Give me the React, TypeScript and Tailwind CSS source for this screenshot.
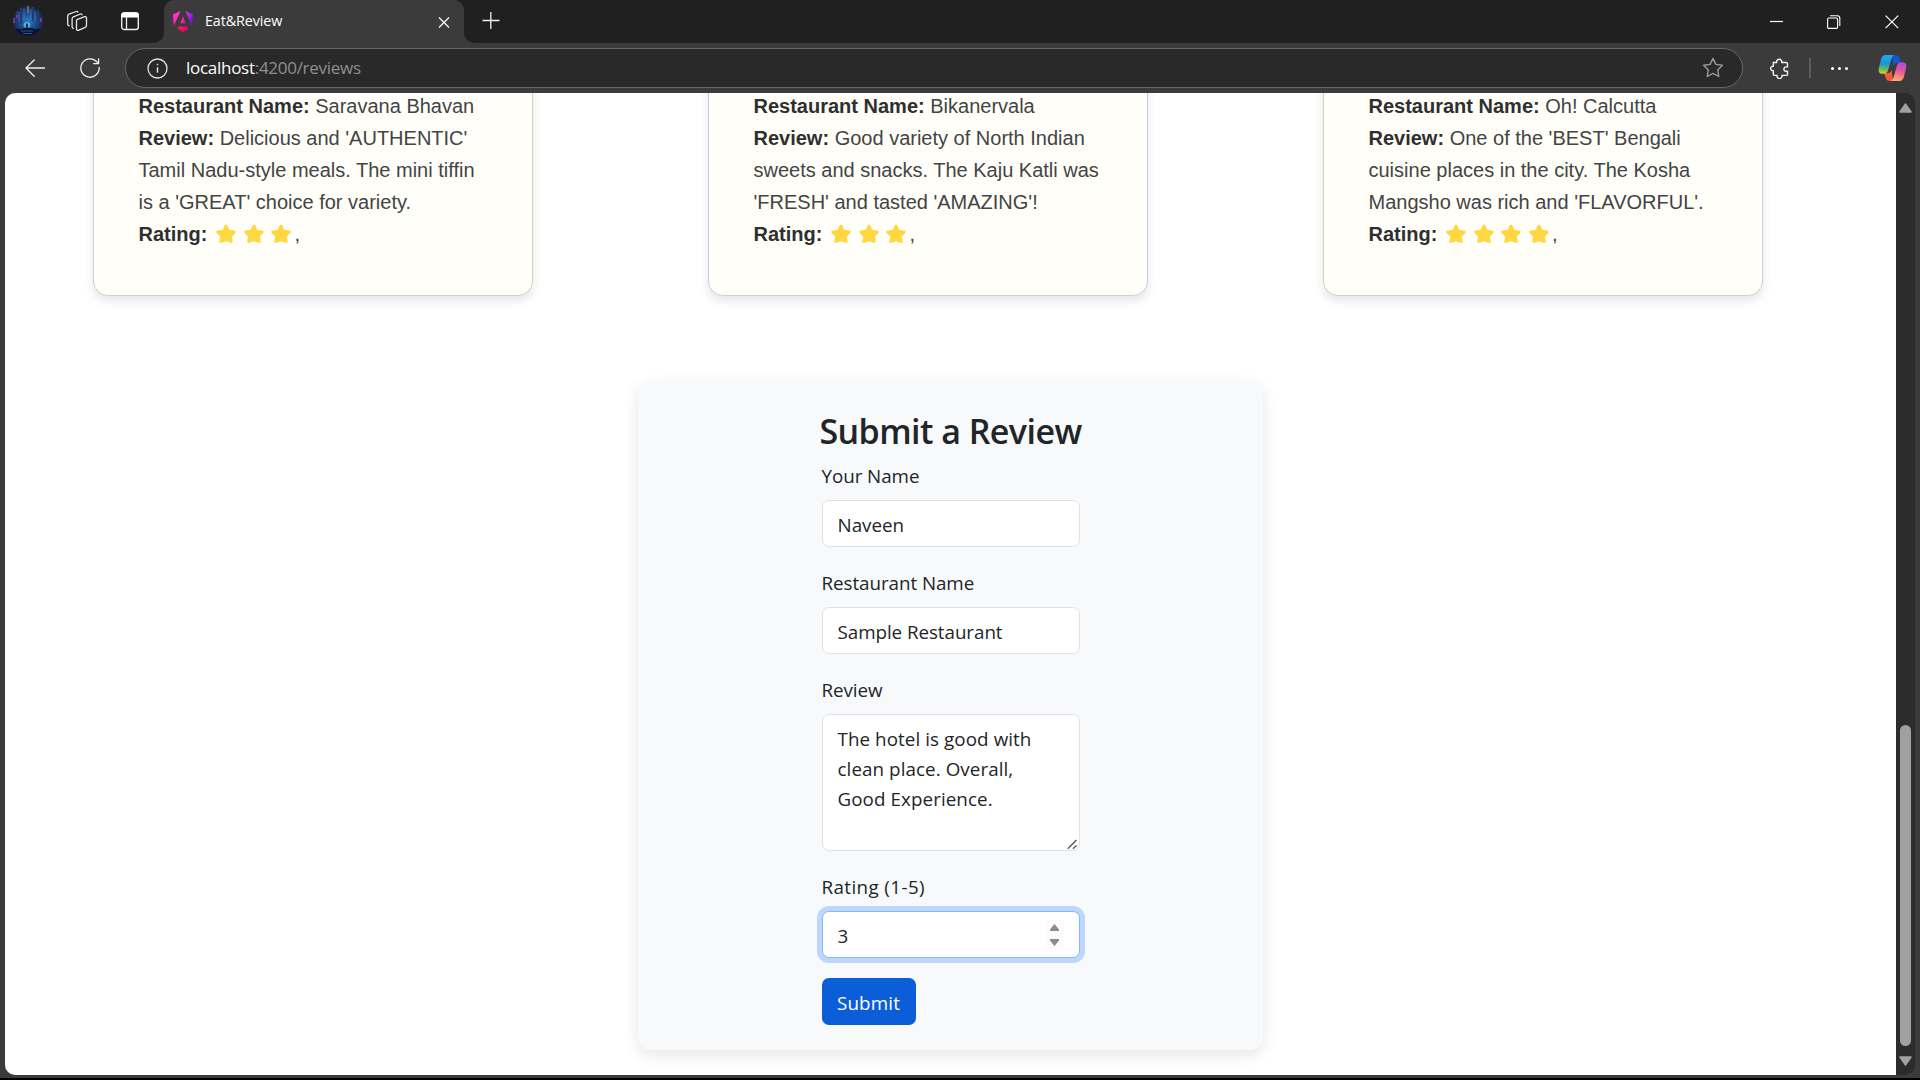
import React from "react";

type Review = { restaurant: string; review: string; stars: number };

const reviews: Review[] = [
  {
    restaurant: "Saravana Bhavan",
    review: "Delicious and 'AUTHENTIC' Tamil Nadu-style meals. The mini tiffin is a 'GREAT' choice for variety.",
    stars: 3,
  },
  {
    restaurant: "Bikanervala",
    review: "Good variety of North Indian sweets and snacks. The Kaju Katli was 'FRESH' and tasted 'AMAZING'!",
    stars: 3,
  },
  {
    restaurant: "Oh! Calcutta",
    review: "One of the 'BEST' Bengali cuisine places in the city. The Kosha Mangsho was rich and 'FLAVORFUL'.",
    stars: 4,
  },
];

function Avatar() {
  return (
    <svg className="ml-[13px] size-[30px] shrink-0" viewBox="0 0 30 30">
      <defs>
        <clipPath id="avatarClip">
          <circle cx="15" cy="15" r="15" />
        </clipPath>
        <radialGradient id="avatarGlow" cx="50%" cy="50%" r="55%">
          <stop offset="0" stopColor="#2b7cc4" />
          <stop offset="0.5" stopColor="#1d4f8c" />
          <stop offset="1" stopColor="#131c46" />
        </radialGradient>
      </defs>
      <g clipPath="url(#avatarClip)">
        <rect width="30" height="30" fill="url(#avatarGlow)" />
        <path d="M4 3v15M8 1v17M20 1v14M25 3v14" stroke="#243a78" strokeWidth="2" />
        <path d="M11 2v12M18 3v10M22 5v10M6 6v9" stroke="#4b7fc0" strokeWidth="0.8" opacity="0.8" />
        <path d="M15 0v7" stroke="#a5775f" strokeWidth="1.4" />
        <path d="M1 12v5M4 9v3M28 12v4" stroke="#b0338c" strokeWidth="1.4" />
        <ellipse cx="14" cy="19" rx="3.4" ry="3" fill="#6fd0f4" opacity="0.7" />
        <path d="M0 23h9l2-1h8l2 1h9v7H0z" fill="#0a1430" />
        <path d="M14 17.5v5" stroke="#0a1430" strokeWidth="1.6" />
        <path d="M8 25h12M10 27.500h9" stroke="#2465a8" strokeWidth="0.8" />
      </g>
    </svg>
  );
}

function WorkspacesIcon() {
  return (
    <svg className="ml-[23px] size-[22px] shrink-0" viewBox="0 0 22 22" fill="none" stroke="#e6e6e6" strokeWidth="1.3" strokeLinejoin="round" strokeLinecap="round">
      <path d="M11.300 9.300 18.800 6.600a1.300 1.300 0 0 1 1.700 1.200v7.800a2 2 0 0 1-1.300 1.800l-6.900 2.900a1.300 1.300 0 0 1-1.800-1.200v-8.100a1.500 1.500 0 0 1 .8-1.700z" />
      <path d="M7.300 18.300a1.500 1.500 0 0 1-1.200-1.500V8.700a2 2 0 0 1 1.300-1.900L14.500 4a1.300 1.300 0 0 1 1.700.7" />
      <path d="M3.200 15.700A1.500 1.500 0 0 1 1.700 14.200V6a2 2 0 0 1 1.300-1.900L10.200 1.500a1.300 1.300 0 0 1 1.700.7" />
    </svg>
  );
}

function TabActionsIcon() {
  return (
    <svg className="ml-[33px] h-[19px] w-[18px] shrink-0" viewBox="0 0 18 19">
      <rect x="0.700" y="1" width="16.600" height="16.500" rx="2.600" fill="none" stroke="#ededed" strokeWidth="1.400" />
      <path d="M.3 5.500V3A2.700 2.700 0 0 1 3 .3h12A2.700 2.700 0 0 1 17.700 3v2.500z" fill="#fff" />
      <path d="M5.500 5v12.500" stroke="#ededed" strokeWidth="1.300" />
    </svg>
  );
}

function AngularLogo() {
  return (
    <svg className="ml-[9px] h-[21px] w-5 shrink-0" viewBox="0 0 223 236">
      <defs>
        <linearGradient id="ngA" x1="49" x2="226" y1="214" y2="130" gradientUnits="userSpaceOnUse">
          <stop stopColor="#E40035" />
          <stop offset=".24" stopColor="#F60A48" />
          <stop offset=".35" stopColor="#F20755" />
          <stop offset=".49" stopColor="#DC087D" />
          <stop offset=".74" stopColor="#9717E7" />
          <stop offset="1" stopColor="#6C00F5" />
        </linearGradient>
        <linearGradient id="ngB" x1="41" x2="156" y1="28" y2="175" gradientUnits="userSpaceOnUse">
          <stop stopColor="#FF31D9" />
          <stop offset="1" stopColor="#FF5BE1" stopOpacity="0" />
        </linearGradient>
      </defs>
      <g>
        <path fill="url(#ngA)" d="m222.077 39.192-8.019 125.923L137.387 0l84.690 39.192Zm-53.105 162.825-57.933 33.056-57.934-33.056 11.783-28.556h92.301l11.783 28.556ZM111.039 62.675l30.357 73.803H80.681l30.358-73.803ZM7.937 165.115 0 39.192 84.690 0 7.937 165.115Z" />
        <path fill="url(#ngB)" d="m222.077 39.192-8.019 125.923L137.387 0l84.690 39.192Zm-53.105 162.825-57.933 33.056-57.934-33.056 11.783-28.556h92.301l11.783 28.556ZM111.039 62.675l30.357 73.803H80.681l30.358-73.803ZM7.937 165.115 0 39.192 84.690 0 7.937 165.115Z" />
      </g>
    </svg>
  );
}

function CopilotLogo() {
  return (
    <svg className="ml-[30px] h-7 w-[29px] shrink-0" viewBox="0 0 29 28">
      <defs>
        <linearGradient id="cpL" x1="8" y1="1" x2="6" y2="20" gradientUnits="userSpaceOnUse">
          <stop stopColor="#22a9f0" />
          <stop offset="0.450" stopColor="#1596d8" />
          <stop offset="0.750" stopColor="#62bb62" />
          <stop offset="1" stopColor="#e4cf22" />
        </linearGradient>
        <linearGradient id="cpR" x1="24" y1="8" x2="19" y2="27" gradientUnits="userSpaceOnUse">
          <stop stopColor="#a44ddf" />
          <stop offset="0.450" stopColor="#e9549c" />
          <stop offset="1" stopColor="#ffad68" />
        </linearGradient>
      </defs>
      <path d="M14 1h3.800a3.500 3.500 0 0 1 3.300 2.400L23 9h-3.500c-2.600 0-3.600 1.300-4.200 3.300z" fill="#1755cf" />
      <path d="M15 27h-3.800a3.500 3.500 0 0 1-3.300-2.400L6 19h3.500c2.600 0 3.600-1.300 4.200-3.300z" fill="#f25c3b" />
      <path d="M7.500 1h9.300c-2 .2-2.700 1.600-3.400 4l-3.300 11.300C9.400 18.700 8 19.700 5.700 19.700H4.500c-3 0-4.500-2-3.700-5.500L3 5.500C3.700 2.600 5 1 7.500 1z" fill="url(#cpL)" />
      <path d="M21.500 27h-9.300c2-.2 2.700-1.600 3.400-4l3.300-11.300c.7-2.400 2.100-3.400 4.400-3.400h1.200c3 0 4.500 2 3.700 5.500L26 22.500c-.7 2.900-2 4.500-4.500 4.500z" fill="url(#cpR)" />
    </svg>
  );
}

function TitleBar() {
  return (
    <div className="flex h-[43px] shrink-0 items-start bg-[#202020]">
      <div className="flex h-[42px] w-[154px] items-center">
        <Avatar />
        <WorkspacesIcon />
        <TabActionsIcon />
      </div>
      <div className="h-[43px] w-[10px] bg-[#3b3b3b]">
        <div className="h-[43px] w-[10px] rounded-br-[10px] bg-[#202020]" />
      </div>
      <div className="h-[43px] w-[300px] bg-[#202020]">
        <div className="flex h-[43px] items-center rounded-t-[10px] bg-[#3b3b3b]">
          <AngularLogo />
          <span className="ml-3 w-[200px] -translate-y-px pr-4 text-[14.300px] leading-5 tracking-[-0.100px] text-white">Eat&amp;Review</span>
          <svg className="ml-[33px] size-3" viewBox="0 0 12 12" stroke="#f0f0f0" strokeWidth="1.400">
            <path d="M1 1.500l10 10M11 1.500l-10 10" />
          </svg>
        </div>
      </div>
      <div className="h-[43px] w-[10px] bg-[#3b3b3b]">
        <div className="h-[43px] w-[10px] rounded-bl-[10px] bg-[#202020]" />
      </div>
      <svg className="mt-3 ml-2 size-[18px]" viewBox="0 0 18 18" stroke="#f0f0f0" strokeWidth="1.300">
        <path d="M.5 8.500h17M8.800 0v17" />
      </svg>
      <div className="mt-[14px] ml-auto flex items-center">
        <svg className="h-4 w-[14px]" viewBox="0 0 14 16" stroke="#fff" strokeWidth="1.200">
          <path d="M0 7.500h13" />
        </svg>
        <svg className="ml-[43px] size-[14px]" viewBox="0 0 14 14" fill="none" stroke="#fff" strokeWidth="1.100">
          <rect x="0.600" y="3" width="10" height="10.400" rx="1.200" />
          <path d="M3 .8h7.500A2.300 2.300 0 0 1 12.800 3v8" />
        </svg>
        <svg className="mr-[21px] ml-11 size-[14px]" viewBox="0 0 14 14" stroke="#fff" strokeWidth="1.200">
          <path d="M.6.6l12.600 12.600M13.200.6.6 13.200" />
        </svg>
      </div>
    </div>
  );
}

function Toolbar() {
  return (
    <div className="flex h-[50px] shrink-0 items-center bg-[#3b3b3b]">
      <svg className="ml-[25px] h-[19px] w-[21px]" viewBox="0 0 21 19" fill="none" stroke="#f0f0f0" strokeWidth="1.300" strokeLinecap="round" strokeLinejoin="round">
        <path d="M19.500 9H1M9.200 1 1 9l8.200 8.300" />
      </svg>
      <svg className="ml-[34px] size-5" viewBox="0 0 20 20" fill="none" stroke="#f0f0f0" strokeWidth="1.300" strokeLinecap="round" strokeLinejoin="round">
        <path d="M19.200 9.500A9.200 9.200 0 1 1 16.800 3.800L18.600 5.600M18.600.8v4.900h-4.900" />
      </svg>
      <div className="ml-[25px] flex h-10 w-[1618px] items-center rounded-full border border-[#666] bg-[#292929]">
        <svg className="ml-[21px] size-[21px]" viewBox="0 0 21 21" fill="none" stroke="#e2e2e2" strokeWidth="1.300">
          <circle cx="10.500" cy="10.500" r="9.500" />
          <path d="M10.500 9.300v5.400" strokeWidth="1.500" />
          <circle cx="10.500" cy="6.600" r="0.500" fill="#e2e2e2" strokeWidth="0.800" />
        </svg>
        <span className="ml-[18px] text-[17px] leading-6 tracking-[-0.280px] text-[#8f8f8f]">
          <span className="text-white">localhost</span>:4200/reviews
        </span>
        <svg className="mr-[18px] ml-auto size-[22px]" viewBox="0 0 22 22" fill="none" stroke="#9a9a9a" strokeWidth="1.400" strokeLinejoin="round">
          <path d="M11 1.400l2.900 6 6.500.9-4.700 4.600 1.100 6.600L11 16.400l-5.800 3.100 1.100-6.600L1.600 8.300l6.500-.9z" />
        </svg>
      </div>
      <svg className="ml-[27px] h-[21px] w-[19px]" viewBox="0 0 19 21" fill="none" stroke="#f0f0f0" strokeWidth="1.400" strokeLinejoin="round">
        <path d="M3.300 4.500h3.400a2.600 2.600 0 1 1 5 0h4.600a1.200 1.200 0 0 1 1.200 1.200v3.200h-1.400a2.200 2.200 0 0 0 0 4.400h1.400v2.900a1.200 1.200 0 0 1-1.200 1.200h-4.400a2.500 2.500 0 1 1-4.800 0H4.500a1.200 1.200 0 0 1-1.200-1.200v-3.600a2.200 2.200 0 1 1 0-4.300z" />
      </svg>
      <div className="ml-5 h-5 w-[2px] bg-[#5c5c5c]" />
      <div className="ml-[20px] flex gap-1">
        <div className="size-[3px] rounded-full bg-white" />
        <div className="size-[3px] rounded-full bg-white" />
        <div className="size-[3px] rounded-full bg-white" />
      </div>
      <CopilotLogo />
    </div>
  );
}

function Star() {
  return (
    <svg className="block h-[20px] w-[20px]" viewBox="0 0 20 20">
      <path
        d="M10 2.200 12.300 7.200 18.200 7.900 14.300 11.900 15.200 17.400 10 15.600 4.800 17.400 5.700 11.900 1.800 7.900 7.700 7.200z"
        fill="#ffd740"
        stroke="#ffd740"
        strokeWidth="3"
        strokeLinejoin="round"
      />
    </svg>
  );
}

function ReviewCard({ restaurant, review, stars }: Review) {
  return (
    <article className="h-[366px] w-[440px] shrink-0 rounded-[15px] border border-[#d0d0cc] bg-[#fffef9] px-[44.500px] pt-[159px] font-['Liberation_Sans',Arial,sans-serif] text-[20px] leading-8 text-[#444] shadow-[0_5px_10px_rgba(0,0,0,0.1)]">
      <p>
        <strong className="text-[#2f2f2f]">Restaurant Name:</strong> {restaurant}
      </p>
      <p>
        <strong className="text-[#2f2f2f]">Review:</strong> {review}
      </p>
      <p className="flex items-center">
        <strong className="text-[#2f2f2f]">Rating:</strong>
        <span className="ml-[9px] flex gap-[7.500px]">
          {Array.from({ length: stars }, (_, i) => (
            <Star key={i} />
          ))}
        </span>
        <span className="ml-[3px]">,</span>
      </p>
    </article>
  );
}

const label = "block h-[30px] text-[18.800px] leading-[30px] tracking-[-0.050px]";
const field =
  "block w-[258px] rounded-[7px] border border-[#dee2e6] bg-white px-[15px] text-[18.800px] text-[#212529] outline-none";

function ReviewForm() {
  return (
    <form className="h-[669px] w-[625px] rounded-[12px] bg-[#f8f9fa] pt-[28px] text-[#212529] shadow-[0_5px_15px_rgba(0,0,0,0.1)]">
      <h2 className="text-center text-[34px] leading-[44px] font-semibold tracking-[-0.550px] whitespace-nowrap">Submit a Review</h2>
      <div className="mx-auto mt-[8px] w-[258px]">
        <label className={label}>Your Name</label>
        <input className={field + " mt-[9px] h-[47px] pt-[3px]"} defaultValue="Naveen" />
        <label className={label + " mt-[21px]"}>Restaurant Name</label>
        <input className={field + " mt-[9px] h-[47px] pt-[3px] tracking-[-0.050px]"} defaultValue="Sample Restaurant" />
        <label className={label + " mt-[21px]"}>Review</label>
        <div className="relative mt-[9px]">
          <textarea
            className={field + " h-[137px] resize-none pt-[9px] leading-[30px] tracking-[0.080px]"}
            defaultValue={"The hotel is good with clean place. Overall, Good Experience."}
          />
          <svg className="absolute right-[2px] bottom-[1px] size-[11px]" viewBox="0 0 11 11" stroke="#555" strokeWidth="1.400">
            <path d="M.8 9.700 9.500 1M6 9.700 9.500 6.500" />
          </svg>
        </div>
        <label className="mt-[21px] block h-[30px] text-[18.800px] leading-[30px] tracking-[0.400px]">Rating (1-5)</label>
        <div className="mt-[9px] flex h-[47px] w-[258px] items-center rounded-[7px] border border-[#86b7fe] bg-white pl-[15px] shadow-[0_0_0_5px_#bdd6fb]">
          <span className="pt-[3px] text-[18.800px]">3</span>
          <div className="mr-[15px] ml-auto flex h-[30px] w-[19px] flex-col items-center justify-center gap-[8px] bg-[#fcfcfc]">
            <svg className="h-[7px] w-[9px]" viewBox="0 0 9 7">
              <path d="M4.500 0 9 5.500V7H0V5.500z" fill="#8b8b8b" />
            </svg>
            <svg className="h-[7px] w-[9px]" viewBox="0 0 9 7">
              <path d="M4.500 7 9 1.500V0H0v1.500z" fill="#8b8b8b" />
            </svg>
          </div>
        </div>
        <button
          type="button"
          className="mt-[20px] flex h-[47px] w-[94px] items-center justify-center rounded-[7px] bg-[#0b5ed7] pt-[3px] text-[18.800px] tracking-[0.150px] text-white"
        >
          Submit
        </button>
      </div>
    </form>
  );
}

function Scrollbar() {
  return (
    <div className="flex w-[19px] shrink-0 flex-col items-center rounded-r-[10px] bg-[#2c2c2c]">
      <svg className="mt-[10px] h-[10px] w-[13px]" viewBox="0 0 13 10">
        <path d="M6.500 1 12 9H1z" fill="#a0a0a0" stroke="#a0a0a0" strokeWidth="1.500" strokeLinejoin="round" />
      </svg>
      <div className="mt-[612px] h-[321px] w-[11px] rounded-full bg-[#a0a0a0]" />
      <svg className="mt-[10px] h-[10px] w-[13px]" viewBox="0 0 13 10">
        <path d="M6.500 9 12 1H1z" fill="#a0a0a0" stroke="#a0a0a0" strokeWidth="1.500" strokeLinejoin="round" />
      </svg>
    </div>
  );
}

export default function App() {
  return (
    <div className="flex h-[1080px] w-[1920px] flex-col overflow-hidden border-b-2 border-black bg-[#3b3b3b] font-['Open_Sans','Noto_Sans',sans-serif]">
      <TitleBar />
      <Toolbar />
      <div className="flex h-[982px] px-[5px]">
        <main className="flex w-[1891px] flex-col overflow-hidden rounded-l-[10px] bg-white">
          <div className="-mt-[163px] flex gap-[175px] pl-[88px]">
            {reviews.map((r) => (
              <ReviewCard key={r.restaurant} {...r} />
            ))}
          </div>
          <div className="mt-[85px] ml-[633px] w-[625px]">
            <ReviewForm />
          </div>
        </main>
        <Scrollbar />
      </div>
    </div>
  );
}
